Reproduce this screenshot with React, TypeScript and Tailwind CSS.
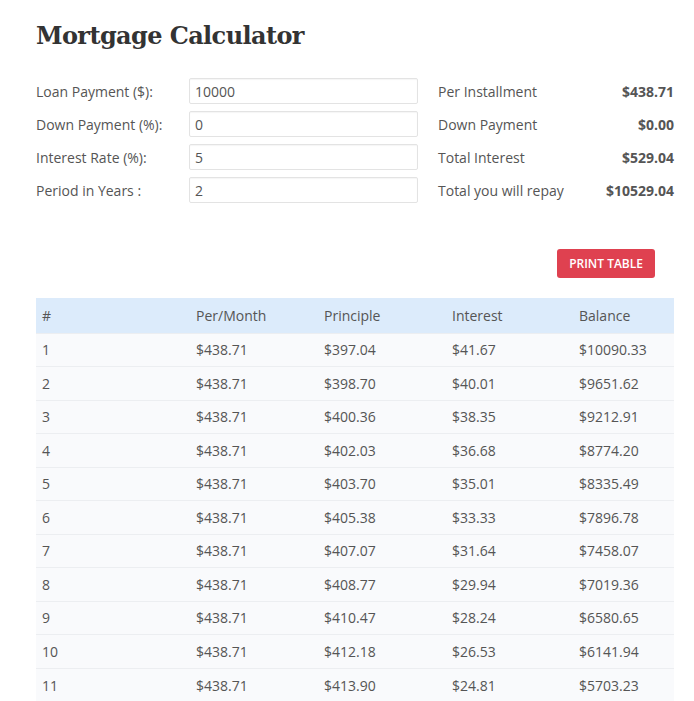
import React from 'react';

const inputs = [
  { label: 'Loan Payment ($):', value: '10000' },
  { label: 'Down Payment (%):', value: '0' },
  { label: 'Interest Rate (%):', value: '5' },
  { label: 'Period in Years :', value: '2' },
];

const summary = [
  { label: 'Per Installment', value: '$438.71' },
  { label: 'Down Payment', value: '$0.00' },
  { label: 'Total Interest', value: '$529.04' },
  { label: 'Total you will repay', value: '$10529.04' },
];

const rows = [
  ['1', '$438.71', '$397.04', '$41.67', '$10090.33'],
  ['2', '$438.71', '$398.70', '$40.01', '$9651.62'],
  ['3', '$438.71', '$400.36', '$38.35', '$9212.91'],
  ['4', '$438.71', '$402.03', '$36.68', '$8774.20'],
  ['5', '$438.71', '$403.70', '$35.01', '$8335.49'],
  ['6', '$438.71', '$405.38', '$33.33', '$7896.78'],
  ['7', '$438.71', '$407.07', '$31.64', '$7458.07'],
  ['8', '$438.71', '$408.77', '$29.94', '$7019.36'],
  ['9', '$438.71', '$410.47', '$28.24', '$6580.65'],
  ['10', '$438.71', '$412.18', '$26.53', '$6141.94'],
  ['11', '$438.71', '$413.90', '$24.81', '$5703.23'],
];

export default function App() {
  return (
    <div className="bg-white h-screen overflow-hidden pl-[36px] pr-[20px] pt-[18px] font-['Open_Sans',sans-serif] text-[14px] text-[#555]">
      {/* Title */}
      <h1 className="font-['DejaVu_Serif',serif] font-bold text-[24px] leading-[36px] text-[#333] tracking-[-0.6px]">
        Mortgage Calculator
      </h1>

      {/* Form + summary */}
      <div className="flex mt-[24px]">
        <div className="flex flex-col gap-[7px] w-[382px]">
          {inputs.map((f) => (
            <div key={f.label} className="flex items-center h-[26px]">
              <span className="w-[153px]">{f.label}</span>
              <input
                defaultValue={f.value}
                className="w-[229px] h-[26px] px-[5px] border border-[#e3e3e3] rounded-[2px] text-[14px] text-[#555] shadow-[inset_0_1px_1px_rgba(0,0,0,0.04)] outline-none"
              />
            </div>
          ))}
        </div>
        <div className="flex flex-col gap-[7px] ml-[20px] flex-1">
          {summary.map((s) => (
            <div key={s.label} className="flex items-center justify-between h-[26px]">
              <span>{s.label}</span>
              <span className="font-bold text-[#555]">{s.value}</span>
            </div>
          ))}
        </div>
      </div>

      {/* Print button */}
      <div className="flex justify-end mt-[46px] pr-[19px]">
        <button className="h-[29px] px-[12px] bg-[#df4150] text-white text-[12px] font-semibold rounded-[3px]">
          PRINT TABLE
        </button>
      </div>

      {/* Table */}
      <table className="w-full mt-[20px] border-collapse">
        <thead>
          <tr className="bg-[#dcebfb] h-[35px] text-left">
            <th className="font-normal pl-[6px] w-[154px]">#</th>
            <th className="font-normal pl-[6px] w-[128px]">Per/Month</th>
            <th className="font-normal pl-[6px] w-[128px]">Principle</th>
            <th className="font-normal pl-[6px] w-[127px]">Interest</th>
            <th className="font-normal pl-[6px]">Balance</th>
          </tr>
        </thead>
        <tbody>
          {rows.map((r) => (
            <tr key={r[0]} className="bg-[#f9fafc] h-[33.5px] border-t border-[#eceef1]">
              {r.map((c, i) => (
                <td key={i} className="pl-[6px]">{c}</td>
              ))}
            </tr>
          ))}
        </tbody>
      </table>
    </div>
  );
}
